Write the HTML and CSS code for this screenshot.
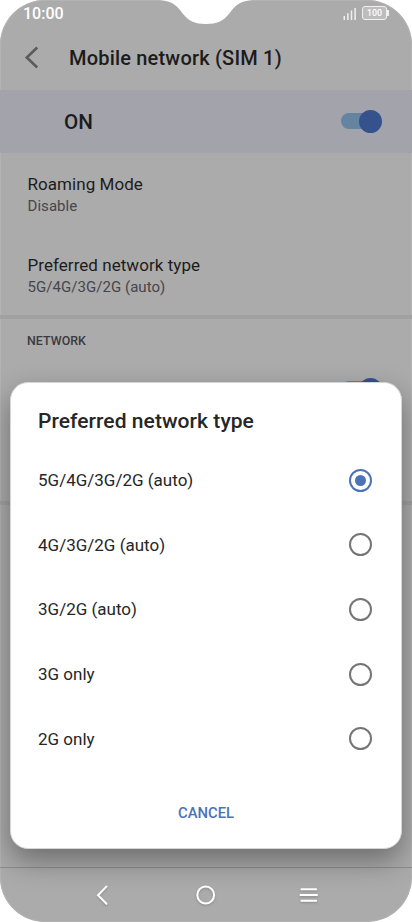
FILE: index.html
```html
<!DOCTYPE html>
<html lang="en">
<head>
<meta charset="utf-8">
<title>Mobile network</title>
<link rel="stylesheet" href="styles.css">
</head>
<body>
<div class="phone">
  <svg class="notch" width="120" height="25" viewBox="0 0 120 25"><path d="M13 0C29 1 32 8 38 15C43 21 49 24 60 24C71 24 77 21 82 15C88 8 91 1 107 0Z" fill="#fff"/></svg>
  <header class="status">
    <span class="time">10:00</span>
    <svg class="signal" width="14" height="13" viewBox="0 0 14 13" stroke="#f0f0f0" stroke-width="1.5"><path d="M1.3 9V13M4.9 6.3V13M8.5 3.6V13M12.1 1V13"/></svg>
    <span class="battery">100</span>
  </header>
  <div class="titlebar">
    <svg width="16" height="24" viewBox="0 0 16 24" fill="none" stroke="#5b5b5b" stroke-width="2.6"><path d="M13.2 1.5L2.8 11.5L13.2 21.5"/></svg>
    <h1>Mobile network (SIM 1)</h1>
  </div>
  <div class="master"><span>ON</span><span class="switch"></span></div>
  <main class="settings">
    <div class="item"><div class="name">Roaming Mode</div><div class="value">Disable</div></div>
    <div class="item"><div class="name">Preferred network type</div><div class="value">5G/4G/3G/2G (auto)</div></div>
    <section class="group">
      <h2>NETWORK</h2>
      <div class="grouprow"><span class="switch"></span></div>
    </section>
  </main>
  <nav class="nav">
    <svg width="16" height="24" viewBox="0 0 16 24"><path d="M11.5 3.5L3 12.2L11.5 20.7"/></svg>
    <svg width="24" height="24" viewBox="0 0 24 24"><circle cx="12.7" cy="12" r="8.4"/></svg>
    <svg width="20" height="24" viewBox="0 0 20 24"><path d="M2.4 6.2H17.2M1.5 12H18M2.4 17.8H17.2"/></svg>
  </nav>
  <div class="dialog">
    <h2>Preferred network type</h2>
    <div class="option"><span>5G/4G/3G/2G (auto)</span><i class="radio on"></i></div>
    <div class="option"><span>4G/3G/2G (auto)</span><i class="radio"></i></div>
    <div class="option"><span>3G/2G (auto)</span><i class="radio"></i></div>
    <div class="option"><span>3G only</span><i class="radio"></i></div>
    <div class="option"><span>2G only</span><i class="radio"></i></div>
    <div class="cancel"><span>CANCEL</span></div>
  </div>
</div>
</body>
</html>
```
FILE: styles.css
```css
* { box-sizing: border-box; }
body { margin: 0; background: #fff; font-family: Roboto, sans-serif; color: #1c1c1c; }
h1, h2 { margin: 0; font-weight: 500; }
.phone { position: relative; width: 412px; height: 922px; overflow: hidden; border-radius: 45px; background: #ababab; display: flex; flex-direction: column; box-shadow: inset 0 0 0 1px #b3b3b3; }
.notch { position: absolute; left: 146px; top: 0; }
.status { height: 27px; flex: none; display: flex; align-items: center; padding: 0 25px 0 23px; color: #fff; }
.time { font-size: 16px; font-weight: 500; flex: 1; line-height: 27px; }
.signal { margin: 0 5px 0 0; }
.battery { position: relative; width: 25px; height: 14px; border: 1.5px solid #f0f0f0; border-radius: 3px; font-size: 8.8px; line-height: 12px; text-align: center; font-weight: 500; background: #bdbdbd; margin-top: -1px; }
.battery::after { content: ""; position: absolute; right: -3px; top: 3px; width: 2px; height: 6px; background: #f0f0f0; }
.titlebar { height: 63px; flex: none; display: flex; align-items: center; padding: 0 0 1px 24px; }
.titlebar h1 { font-size: 20px; letter-spacing: .19px; margin-left: 29px; }
.master { height: 63px; flex: none; background: #a3a4ab; display: flex; align-items: center; justify-content: space-between; padding: 0 30px 0 64px; font-size: 20.7px; font-weight: 500; }
.switch { position: relative; display: block; width: 41px; height: 23px; }
.switch::before { content: ""; position: absolute; left: 0; top: 3px; width: 34px; height: 16px; border-radius: 8px; background: #6484a2; }
.switch::after { content: ""; position: absolute; right: 0; top: 0; width: 23px; height: 23px; border-radius: 50%; background: #35528c; }
.settings { flex: 1; }
.item { height: 81px; padding: 20px 27px 0; }
.name { font-size: 17px; letter-spacing: .05px; line-height: 22px; }
.value { font-size: 15px; letter-spacing: .05px; line-height: 22px; color: #46464a; }
.item .name, .item .value { padding-left: .5px; }
.group { height: 190px; border-top: 4px solid #a1a1a1; border-bottom: 4px solid #a1a1a1; padding: 14px 30px 0 27px; }
.group h2 { font-size: 12.4px; letter-spacing: .05px; line-height: 16px; color: #3a3a3f; }
.grouprow { display: flex; justify-content: flex-end; padding-top: 29px; }
.nav { height: 55px; flex: none; border-top: 1px solid #8d8d8d; display: flex; align-items: center; justify-content: center; gap: 82px; padding: 0 0 1px 2px; }
.nav svg { fill: none; stroke: #fff; stroke-width: 2; stroke-linecap: round; filter: drop-shadow(0 1px 1px #0003); }
.dialog { position: absolute; left: 10px; top: 382px; width: 392px; height: 467px; border-radius: 18px; background: #fff; padding: 21px 29px 0 27px; box-shadow: 0 12px 28px #0000005c; color: #262626; border: 1px solid #d5d5d5; }
.dialog h2 { font-size: 21px; line-height: 34px; letter-spacing: .06px; margin-bottom: 10px; }
.option { height: 64.6px; display: flex; align-items: center; justify-content: space-between; font-size: 17px; }
.radio { display: grid; place-items: center; width: 23px; height: 23px; border: 2px solid #757575; border-radius: 50%; }
.radio.on { border-color: #4c72b8; }
.radio.on::after { content: ""; width: 11px; height: 11px; border-radius: 50%; background: #4c72b8; }
.cancel { text-align: center; font-size: 14.8px; font-weight: 500; color: #4c72b8; line-height: 20px; padding: 32px 0 0 2px; }
```
